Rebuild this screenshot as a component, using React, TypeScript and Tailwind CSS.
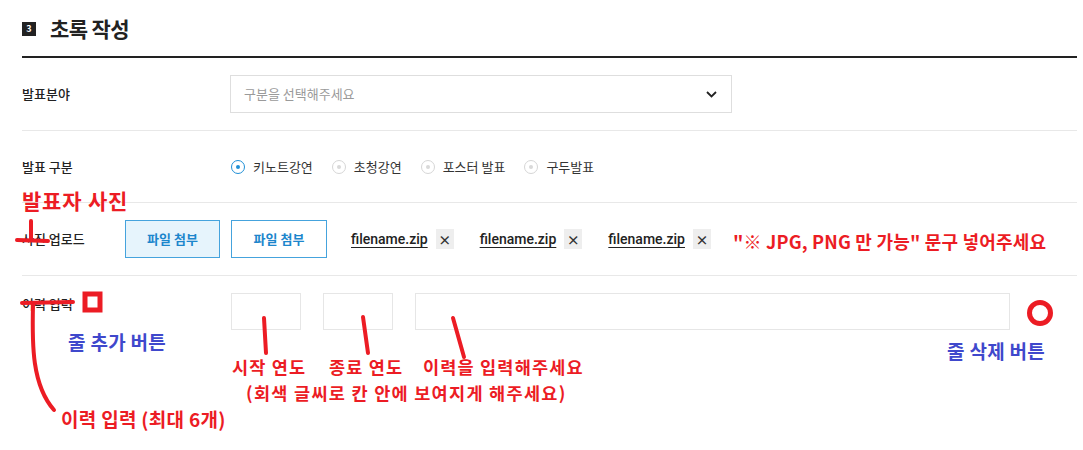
import React from 'react';

const RED = 'text-[#ec1c24]';
const BLUE = 'text-[#3f48cc]';

const RADIOS = [
  { label: '키노트강연', checked: true },
  { label: '초청강연', checked: false },
  { label: '포스터 발표', checked: false },
  { label: '구두발표', checked: false },
];

const FILES = ['filename.zip', 'filename.zip', 'filename.zip'];

function Radio({ checked }: { checked: boolean }) {
  return (
    <span
      className={`flex h-[14px] w-[14px] items-center justify-center rounded-full border ${
        checked ? 'border-[#1f8fd6]' : 'border-[#d6d6d6]'
      }`}
    >
      <span className={`h-[4px] w-[4px] rounded-full ${checked ? 'bg-[#1f8fd6]' : 'bg-[#d9d9d9]'}`} />
    </span>
  );
}

// hand-drawn review marks laid over the form
function Marks() {
  return (
    <svg
      className="pointer-events-none absolute left-0 top-0"
      width="1083"
      height="450"
      viewBox="0 0 1083 450"
      fill="none"
      stroke="#ec1c24"
      strokeLinecap="round"
    >
      {/* 사진 업로드 cross */}
      <path d="M31 221 L31 240" strokeWidth="4" />
      <path d="M17 240 L48 241" strokeWidth="4" />
      {/* 이력 입력 strike + curve */}
      <path d="M22 303 L73 302" strokeWidth="4" />
      <path d="M33 305 C 32 345, 32 385, 54 410" strokeWidth="4" />
      {/* add-row square */}
      <rect x="85" y="294" width="15" height="16" strokeWidth="5" strokeLinecap="butt" />
      {/* pointers to inputs */}
      <path d="M264 318 L266 353" strokeWidth="4" />
      <path d="M363 317 L368 353" strokeWidth="4" />
      <path d="M453 318 L464 357" strokeWidth="4" />
      {/* delete-row circle */}
      <circle cx="1040" cy="313" r="10.5" strokeWidth="5" />
    </svg>
  );
}

export default function App() {
  return (
    <div className="relative h-[450px] w-[1083px] overflow-hidden bg-white pl-[22px] pr-[6px] font-['Noto_Sans_CJK_KR','Noto_Sans',sans-serif] text-[#222]">
      {/* Section header */}
      <div className="flex h-[58px] items-center gap-[14px] border-b-2 border-[#222] pt-[1px]">
        <span className="flex h-[14px] w-[14px] items-center justify-center bg-[#222] text-[9px] font-bold leading-none text-white">
          3
        </span>
        <h2 className="text-[21px] font-bold tracking-[-0.6px] text-[#222]">초록 작성</h2>
      </div>

      {/* 발표분야 */}
      <div className="flex h-[73px] items-center border-b border-[#e8e8e8]">
        <div className="w-[208px] text-[13px] font-medium">발표분야</div>
        <div className="flex h-[38px] w-[502px] items-center justify-between border border-[#dedede] pl-[13px] pr-[14px] text-[13px] text-[#9a9a9a]">
          <span>구분을 선택해주세요</span>
          <svg width="11" height="7" viewBox="0 0 11 7" fill="none" stroke="#222" strokeWidth="1.8">
            <path d="M1 1 L5.5 5.5 L10 1" />
          </svg>
        </div>
      </div>

      {/* 발표 구분 */}
      <div className="flex h-[72px] items-center border-b border-[#e8e8e8]">
        <div className="w-[209px] text-[13px] font-medium">발표 구분</div>
        <div className="flex items-center gap-[19px]">
          {RADIOS.map((r) => (
            <label key={r.label} className="flex items-center gap-[8px] text-[13px] text-[#333]">
              <Radio checked={r.checked} />
              {r.label}
            </label>
          ))}
        </div>
      </div>

      {/* 사진 업로드 */}
      <div className="flex h-[73px] items-center border-b border-[#e8e8e8]">
        <div className="w-[103px] text-[13px] font-medium">사진 업로드</div>
        <button className="h-[38px] w-[95px] border border-[#45a3dd] bg-[#e6f4fc] text-[13px] font-bold text-[#1c86cc]">
          파일 첨부
        </button>
        <button className="ml-[11px] h-[38px] w-[96px] border border-[#45a3dd] bg-white text-[13px] font-bold text-[#1c86cc]">
          파일 첨부
        </button>
        <div className="ml-[24px] flex items-center gap-[26px]">
          {FILES.map((f, i) => (
            <div key={i} className="flex items-center gap-[8px]">
              <span className="font-['Roboto',sans-serif] text-[14px] font-medium text-[#222] underline decoration-[1px] underline-offset-[3px]">
                {f}
              </span>
              <span className="flex h-[20px] w-[18px] items-center justify-center bg-[#eeeeee] text-[13px] font-bold leading-none text-[#333]">
                ×
              </span>
            </div>
          ))}
        </div>
      </div>

      {/* 이력 입력 */}
      <div className="flex pt-[17px]">
        <div className="mt-[1px] w-[209px] text-[13px] font-medium leading-[19px]">이력 입력</div>
        <div className="h-[37px] w-[70px] border border-[#e6e6e6]" />
        <div className="ml-[22px] h-[37px] w-[70px] border border-[#e6e6e6]" />
        <div className="ml-[22px] h-[37px] w-[595px] border border-[#e6e6e6]" />
      </div>

      <Marks />

      {/* annotations */}
      <span className={`absolute left-[22px] top-[188px] text-[21px] font-bold leading-[24px] tracking-[0.8px] ${RED}`}>발표자 사진</span>
      <span className={`absolute left-[733px] top-[230px] text-[18px] font-bold leading-[22px] tracking-[0.2px] ${RED}`}>
        "※ JPG, PNG 만 가능" 문구 넣어주세요
      </span>
      <span className={`absolute left-[68px] top-[331px] text-[19px] font-bold leading-[22px] tracking-[0.3px] ${BLUE}`}>줄 추가 버튼</span>
      <span className={`absolute left-[947px] top-[340px] text-[19px] font-bold leading-[22px] tracking-[0.3px] ${BLUE}`}>줄 삭제 버튼</span>
      <span className={`absolute left-[232px] top-[354px] text-[17.5px] font-bold leading-[26px] tracking-[1.2px] ${RED}`}>시작 연도</span>
      <span className={`absolute left-[329px] top-[354px] text-[17.5px] font-bold leading-[26px] tracking-[1.2px] ${RED}`}>종료 연도</span>
      <span className={`absolute left-[423px] top-[354px] text-[17.5px] font-bold leading-[26px] tracking-[1.2px] ${RED}`}>이력을 입력해주세요</span>
      <span className={`absolute left-[246px] top-[380px] text-[17.5px] font-bold leading-[26px] tracking-[1.3px] ${RED}`}>
        (회색 글씨로 칸 안에 보여지게 해주세요)
      </span>
      <span className={`absolute left-[61px] top-[408px] text-[19px] font-bold leading-[22px] tracking-[0.3px] ${RED}`}>이력 입력 (최대 6개)</span>
    </div>
  );
}
